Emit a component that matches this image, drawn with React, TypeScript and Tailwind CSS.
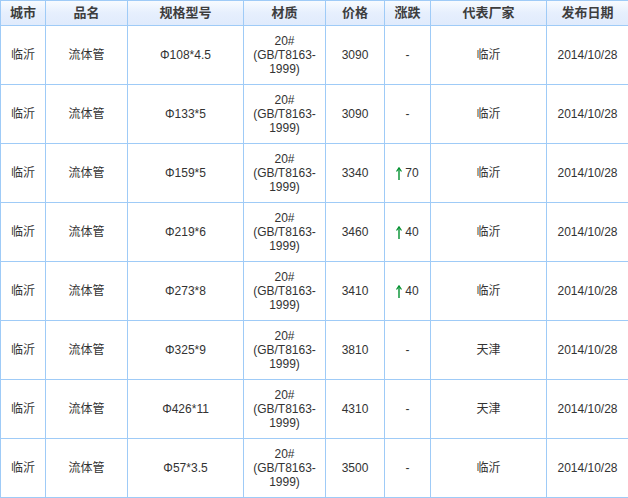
const headers = ['城市', '品名', '规格型号', '材质', '价格', '涨跌', '代表厂家', '发布日期']

const rows = [
  { spec: 'Φ108*4.5', price: '3090', change: '', maker: '临沂' },
  { spec: 'Φ133*5', price: '3090', change: '', maker: '临沂' },
  { spec: 'Φ159*5', price: '3340', change: '70', maker: '临沂' },
  { spec: 'Φ219*6', price: '3460', change: '40', maker: '临沂' },
  { spec: 'Φ273*8', price: '3410', change: '40', maker: '临沂' },
  { spec: 'Φ325*9', price: '3810', change: '', maker: '天津' },
  { spec: 'Φ426*11', price: '4310', change: '', maker: '天津' },
  { spec: 'Φ57*3.5', price: '3500', change: '', maker: '临沂' },
]

const cell = 'flex items-center justify-center border-r border-b border-[#9fcbf7] text-center'

function UpArrow() {
  return (
    <svg width="6" height="13" viewBox="0 0 6 13" className="text-[#00902f]">
      <path d="M3 1 V13" stroke="currentColor" strokeWidth="1.4" />
      <path d="M0.5 4.5 L3 0.8 L5.5 4.5" fill="none" stroke="currentColor" strokeWidth="1.2" />
    </svg>
  )
}

export default function App() {
  return (
    <div className="w-[628px] h-[498px] overflow-hidden bg-white font-['Liberation_Sans','Noto_Sans_CJK_SC',sans-serif]">
      <div className="grid w-[663px] grid-cols-[45px_82px_116px_82px_59px_46px_116px_82px] grid-rows-[25px_repeat(8,59px)] border-l border-t border-[#9fcbf7]">
        {headers.map((h) => (
          <div key={h} className={`${cell} bg-gradient-to-b from-[#f8fbff] via-[#e6effd] to-[#e0ebfc] text-[13px] font-bold text-[#3d3d3d]`}>
            {h}
          </div>
        ))}

        {rows.map((r, i) => (
          <div key={i} className="contents text-[12px] text-[#333]">
            <div className={cell}>临沂</div>
            <div className={cell}>流体管</div>
            <div className={cell}>{r.spec}</div>
            <div className={`${cell} leading-[14px]`}>
              <span>
                20#
                <br />
                (GB/T8163-
                <br />
                1999)
              </span>
            </div>
            <div className={cell}>{r.price}</div>
            <div className={cell}>
              {r.change ? (
                <span className="flex items-center gap-[3px]">
                  <UpArrow />
                  <span>{r.change}</span>
                </span>
              ) : (
                '-'
              )}
            </div>
            <div className={cell}>{r.maker}</div>
            <div className={cell}>2014/10/28</div>
          </div>
        ))}
      </div>
    </div>
  )
}
